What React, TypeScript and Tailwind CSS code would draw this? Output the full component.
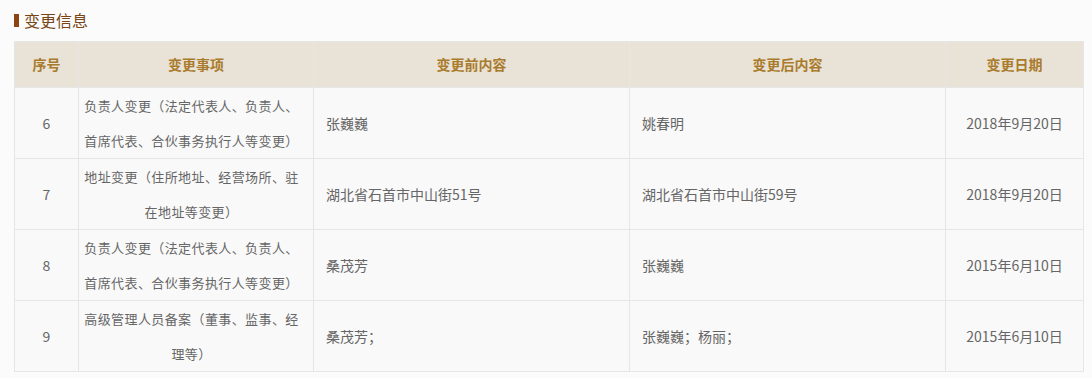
const rows = [
  {
    no: 6,
    item: "负责人变更（法定代表人、负责人、首席代表、合伙事务执行人等变更）",
    before: "张巍巍",
    after: "姚春明",
    date: "2018年9月20日",
  },
  {
    no: 7,
    item: "地址变更（住所地址、经营场所、驻在地址等变更）",
    before: "湖北省石首市中山街51号",
    after: "湖北省石首市中山街59号",
    date: "2018年9月20日",
  },
  {
    no: 8,
    item: "负责人变更（法定代表人、负责人、首席代表、合伙事务执行人等变更）",
    before: "桑茂芳",
    after: "张巍巍",
    date: "2015年6月10日",
  },
  {
    no: 9,
    item: "高级管理人员备案（董事、监事、经理等）",
    before: "桑茂芳；",
    after: "张巍巍；杨丽；",
    date: "2015年6月10日",
  },
]

export default function App() {
  return (
    <div
      className="min-h-[378px] w-[1092px] bg-[#fbfbfb] pl-[14px] pr-[9px] pt-[9px]"
      style={{ fontFamily: '"Noto Sans CJK SC", "Noto Sans", sans-serif' }}
    >
      {/* Section title */}
      <div className="flex h-[22px] items-center gap-[5px]">
        <span className="h-[13px] w-[5px] bg-[#8b4513]" />
        <span className="text-[16px] leading-[22px] text-[#7a4516]">变更信息</span>
      </div>

      <table className="mt-[10px] w-[1069px] table-fixed border-collapse text-[14px] text-[#666]">
        <colgroup>
          <col className="w-[64px]" />
          <col className="w-[235px]" />
          <col className="w-[316px]" />
          <col className="w-[316px]" />
          <col className="w-[138px]" />
        </colgroup>
        <thead>
          <tr className="h-[46px] bg-[#e9e2d6] font-bold text-[#a97b2c]">
            <th className="border border-[#e6e6e6] text-center">序号</th>
            <th className="border border-[#e6e6e6] text-center">变更事项</th>
            <th className="border border-[#e6e6e6] text-center">变更前内容</th>
            <th className="border border-[#e6e6e6] text-center">变更后内容</th>
            <th className="border border-[#e6e6e6] text-center">变更日期</th>
          </tr>
        </thead>
        <tbody className="bg-[#f9f9f9]">
          {rows.map((r) => (
            <tr key={r.no} className="h-[71px]">
              <td className="border border-[#e6e6e6] text-center">{r.no}</td>
              <td className="border border-[#e6e6e6] pl-[2px] pr-[11px] text-center text-[13px] leading-[35px] tracking-[0.4px]">
                {r.item}
              </td>
              <td className="border border-[#e6e6e6] px-[12px] text-left">{r.before}</td>
              <td className="border border-[#e6e6e6] px-[12px] text-left">{r.after}</td>
              <td className="border border-[#e6e6e6] text-center">{r.date}</td>
            </tr>
          ))}
        </tbody>
      </table>
    </div>
  )
}
